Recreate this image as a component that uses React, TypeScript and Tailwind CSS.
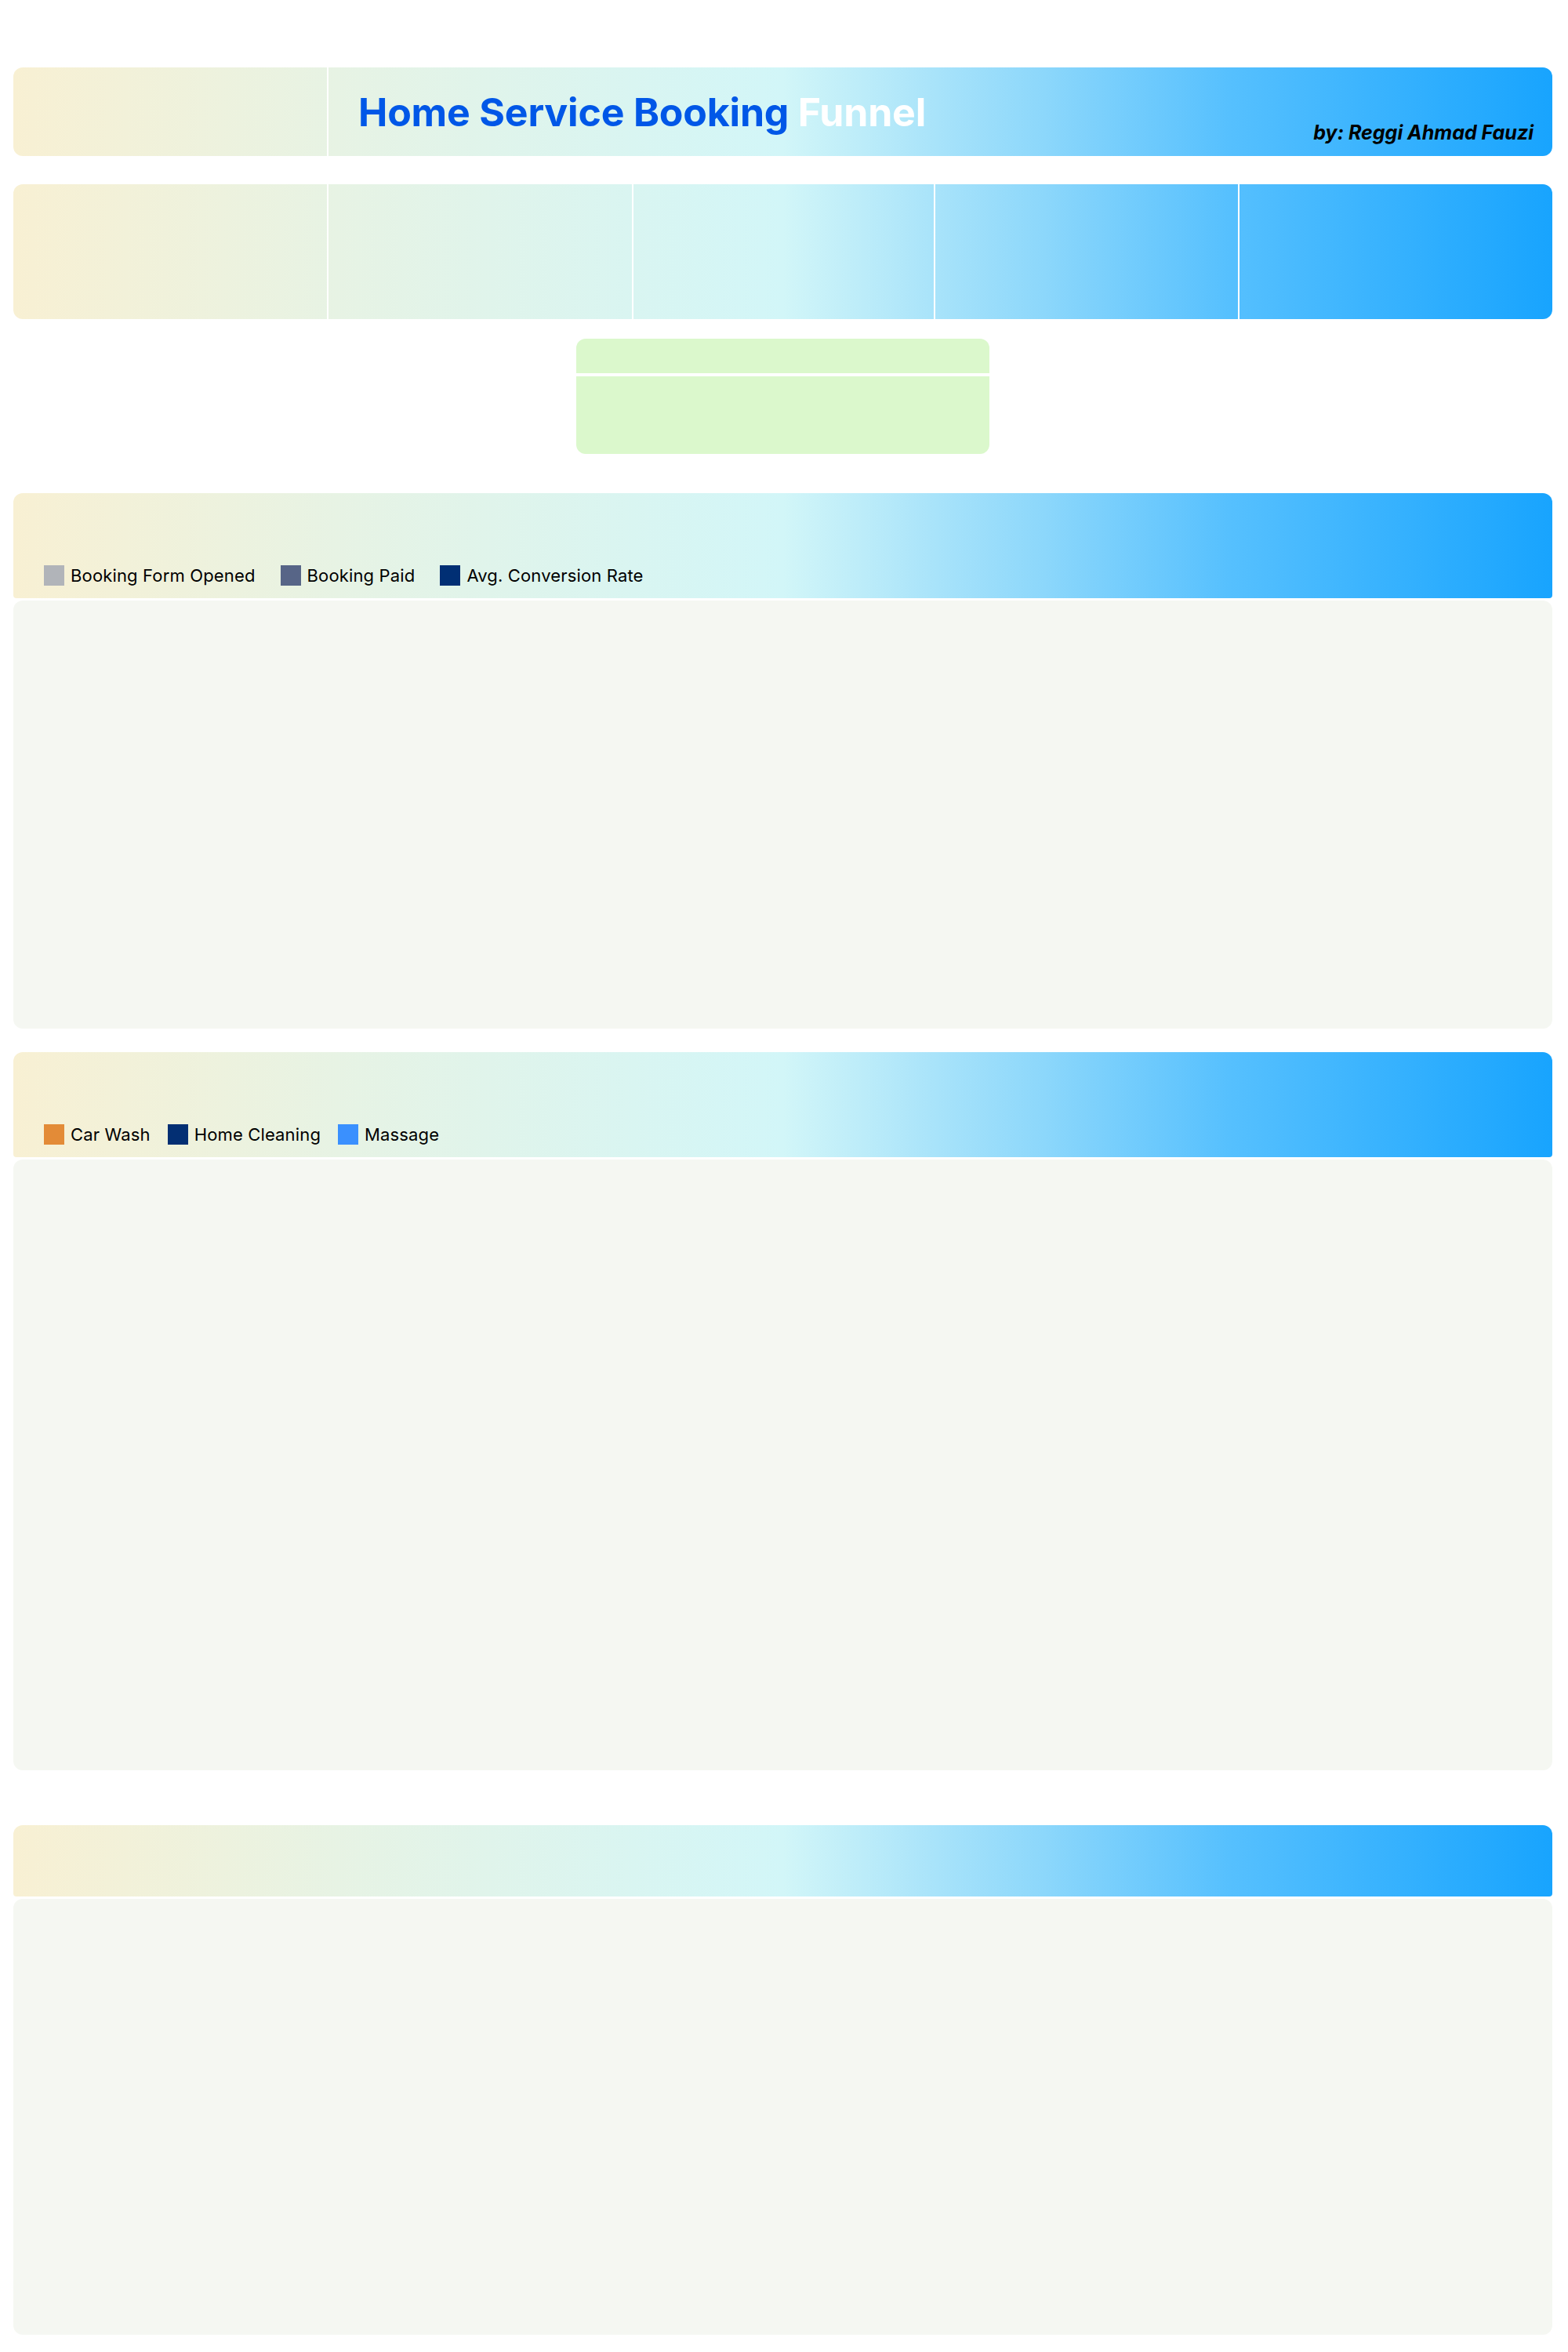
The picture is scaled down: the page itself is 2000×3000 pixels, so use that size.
import React from 'react';

const heroGradient =
  'bg-[linear-gradient(90deg,#f8f0d3_0%,#e7f3e4_21%,#d2f6f8_50%,#a8e3fa_60%,#8cd7fb_67%,#56c0fe_79%,#18a4fe_100%)]';

interface LegendItem {
  label: string;
  color: string;
}

const funnelLegend: LegendItem[] = [
  { label: 'Booking Form Opened', color: 'bg-[#b1b4b9]' },
  { label: 'Booking Paid', color: 'bg-[#576587]' },
  { label: 'Avg. Conversion Rate', color: 'bg-[#012f74]' },
];

const serviceLegend: LegendItem[] = [
  { label: 'Car Wash', color: 'bg-[#e38b37]' },
  { label: 'Home Cleaning', color: 'bg-[#032f73]' },
  { label: 'Massage', color: 'bg-[#3a90fe]' },
];

function Legend({ items, gap }: { items: LegendItem[]; gap: string }) {
  return (
    <div className={`flex items-center ${gap}`}>
      {items.map((item) => (
        <div key={item.label} className="flex items-center gap-2">
          <span className={`block h-[26px] w-[26px] ${item.color}`} />
          <span className="text-[22px] leading-none tracking-[0.15px] text-black">{item.label}</span>
        </div>
      ))}
    </div>
  );
}

function Section({
  headerHeight,
  bodyHeight,
  legend,
  legendGap,
}: {
  headerHeight: string;
  bodyHeight: string;
  legend?: LegendItem[];
  legendGap?: string;
}) {
  return (
    <section className="flex flex-col gap-[3px]">
      <div
        className={`flex items-end rounded-t-[12px] rounded-b-[4px] px-[39px] pb-[16px] ${heroGradient} ${headerHeight}`}
      >
        {legend && <Legend items={legend} gap={legendGap ?? 'gap-6'} />}
      </div>
      <div className={`rounded-[12px] bg-[#f5f7f2] ${bodyHeight}`} />
    </section>
  );
}

export default function App() {
  return (
    <div className="min-h-screen bg-white font-['Inter','Liberation_Sans',sans-serif]">
      <div className="ml-[17px] flex w-[1963px] flex-col pt-[86px] pb-[21px]">
        {/* Title banner */}
        <header className={`flex h-[113px] rounded-[12px] ${heroGradient}`}>
          <div className="w-[402px] border-r-2 border-white" />
          <div className="flex flex-1 items-center pl-[38px]">
            <h1 className="text-[50px] leading-none font-bold tracking-[-0.2px] text-[#0057e7]">
              Home Service Booking <span className="text-white">Funnel</span>
            </h1>
          </div>
          <div className="flex items-end pr-[24px] pb-[17px]">
            <p className="text-[25px] leading-none font-bold text-black italic">
              by: Reggi Ahmad Fauzi
            </p>
          </div>
        </header>

        {/* KPI strip */}
        <div
          className={`mt-[36px] flex h-[172px] divide-x-2 divide-white overflow-hidden rounded-[12px] ${heroGradient}`}
        >
          <div className="w-[402px]" />
          <div className="w-[389px]" />
          <div className="w-[385px]" />
          <div className="w-[388px]" />
          <div className="flex-1" />
        </div>

        {/* Summary card */}
        <div className="mx-auto mt-[25px] flex w-[527px] flex-col gap-[4px]">
          <div className="h-[44px] rounded-t-[12px] bg-[#dbf8cc]" />
          <div className="h-[99px] rounded-b-[12px] bg-[#dbf8cc]" />
        </div>

        <div className="mt-[50px]">
          <Section
            headerHeight="h-[134px]"
            bodyHeight="h-[546px]"
            legend={funnelLegend}
            legendGap="gap-[32px]"
          />
        </div>

        <div className="mt-[30px]">
          <Section
            headerHeight="h-[134px]"
            bodyHeight="h-[779px]"
            legend={serviceLegend}
            legendGap="gap-[22px]"
          />
        </div>

        <div className="mt-[70px]">
          <Section headerHeight="h-[91px]" bodyHeight="h-[556px]" />
        </div>
      </div>
    </div>
  );
}
